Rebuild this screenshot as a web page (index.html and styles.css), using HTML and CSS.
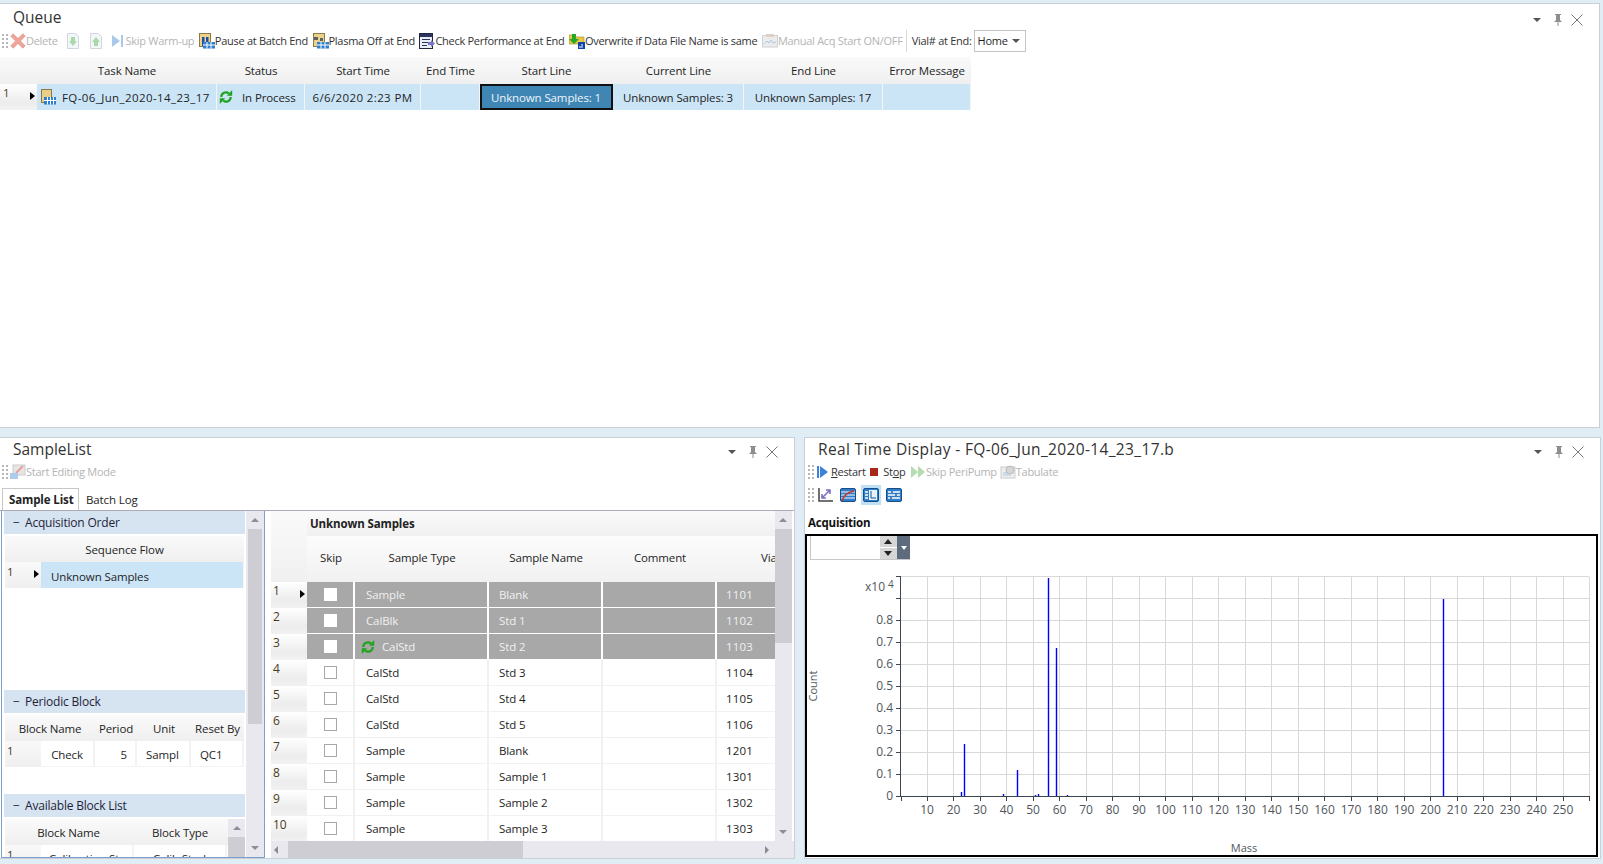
FILE: index.html
```html
<!DOCTYPE html>
<html lang="en">
<head>
<meta charset="utf-8">
<title>Queue</title>
<link rel="stylesheet" href="styles.css">
</head>
<body>
<svg class="defs" width="0" height="0" aria-hidden="true">
  <symbol id="grip" viewBox="0 0 6 14"><g fill="#b5b5b5"><rect x="0" y="0" width="2" height="2"/><rect x="4" y="0" width="2" height="2"/><rect x="0" y="4" width="2" height="2"/><rect x="4" y="4" width="2" height="2"/><rect x="0" y="8" width="2" height="2"/><rect x="4" y="8" width="2" height="2"/><rect x="0" y="12" width="2" height="2"/><rect x="4" y="12" width="2" height="2"/></g></symbol>
  <symbol id="plate" viewBox="0 0 16 16"><rect x="1.500" y=".5" width="10" height="13" fill="#e8cf87" stroke="#8a7a4a"/><rect x="4" y="8" width="12" height="7.500" fill="#2f7fd0"/><path d="M4 11.500h12M7.500 8v7.500M10.500 8v7.500M13.500 8v7.500" stroke="#fff"/></symbol>
  <symbol id="cycle" viewBox="0 0 14 16"><path d="M2.300 8A4.600 4.600 0 0 1 9.800 4.400" fill="none" stroke="#1fa31f" stroke-width="2.200"/><path d="M7.800 6.800h5.400V1z" fill="#1fa31f"/><path d="M11.700 8A4.600 4.600 0 0 1 4.200 11.600" fill="none" stroke="#1fa31f" stroke-width="2.200"/><path d="M6.200 9.200H.8V15z" fill="#1fa31f"/></symbol>
  <symbol id="down" viewBox="0 0 12 16"><path d="M.5.500h8l3 3v12H.5z" fill="#f4f7fa" stroke="#cfd8e0"/><path d="M4 4h4v4h2l-4 5-4-5h2z" fill="#a9d8a9"/></symbol>
  <symbol id="up" viewBox="0 0 12 16"><path d="M.5.500h8l3 3v12H.5z" fill="#f4f7fa" stroke="#cfd8e0"/><path d="M4 13h4V9h2L6 4 2 9h2z" fill="#a9d8a9"/></symbol>
</svg>

<main class="app">
  <section class="panel queue">
    <header class="title-row top">
      <h2 class="title">Queue</h2>
      <div class="win-btns"><i class="tri"></i><svg class="pin" viewBox="0 0 10 12"><path d="M2 0h6v1H7v5l2 2H1l2-2V1H2zM4.500 8h1v4h-1z" fill="#8e8e8e"/></svg><svg class="close" viewBox="0 0 12 12"><path d="M.5.500l11 11M11.500.500l-11 11" stroke="#777" fill="none"/></svg></div>
    </header>
    <div class="toolbar">
      <svg class="grip"><use href="#grip"/></svg>
      <span class="tool off first"><svg class="ico" viewBox="0 0 16 16"><path d="M.8 3.200l2.400-2.400L8 5.600l4.800-4.800 2.400 2.400L10.400 8l4.800 4.800-2.400 2.400L8 10.400l-4.800 4.800-2.400-2.400L5.600 8z" fill="#efa59a" stroke="#d98a80" stroke-width=".6"/></svg>Delete</span>
      <span class="tool off arrow-down"><svg class="ico small"><use href="#down"/></svg></span>
      <span class="tool off arrow-up"><svg class="ico small"><use href="#up"/></svg></span>
      <span class="tool off skip"><svg class="ico" viewBox="0 0 16 16"><path d="M2 2l8 6-8 6z" fill="#a9c9ea"/><rect x="11" y="2" width="2" height="12" fill="#a9c9ea"/></svg>Skip Warm-up</span>
      <span class="tool"><svg class="ico" viewBox="0 0 16 16"><rect x=".5" y=".5" width="11" height="13" fill="#ecd28a" stroke="#8a7a4a"/><path d="M3 4h2.500v9H3zM7 4h2.500v9H7z" fill="#1d4fa8"/><rect x="4" y="9" width="12" height="6.500" fill="#2f7fd0"/><path d="M4 12h12M8 9v6.500M12 9v6.500" stroke="#fff"/></svg>Pause at Batch End</span>
      <span class="tool"><svg class="ico" viewBox="0 0 16 16"><rect x=".5" y=".5" width="11" height="13" fill="#ecd28a" stroke="#8a7a4a"/><path d="M1 4h4v3H1zM7 5h3v3H7z" fill="#5c6068"/><rect x="4" y="9" width="12" height="6.500" fill="#2f7fd0"/><path d="M4 12h12M8 9v6.500M12 9v6.500" stroke="#fff"/></svg>Plasma Off at End</span>
      <span class="tool"><svg class="ico" viewBox="0 0 16 16"><rect x=".5" y=".5" width="13" height="15" fill="#e9edf5" stroke="#22273f"/><rect x="1" y="1" width="12" height="3" fill="#2b3560"/><path d="M3 6.500h8M3 9.500h6M3 12.500h5" stroke="#2b3560"/><path d="M9 9h3V7l4 3.500L12 14v-2H9z" fill="#7b73c8"/></svg>Check Performance at End</span>
      <span class="tool"><svg class="ico" viewBox="0 0 16 16"><path d="M0 2h6l1 2h8v7H0z" fill="#e8c84a" stroke="#a08a2a" stroke-width=".6"/><path d="M3 1h4v5h3l-5 5-5-5h3z" fill="#27a827"/><rect x="9" y="9" width="7" height="7" fill="#0d47a8"/><path d="M11 15v-2M13 15v-4" stroke="#fff"/></svg>Overwrite if Data File Name is same</span>
      <span class="tool off"><svg class="ico" viewBox="0 0 16 16"><rect x=".5" y="2.500" width="15" height="11.500" fill="#ececec" stroke="#d0d0d0"/><path d="M2 11l3-3 2 2 2-3 2 3 3-1" stroke="#a9c9ea" fill="none"/><rect x="4" y="1" width="8" height="3" fill="#e2cfc4"/></svg>Manual Acq Start ON/OFF</span>
      <i class="sep"></i>
      <span class="tool vial">Vial# at End:</span>
      <div class="combo">Home<i class="tri dark"></i></div>
    </div>
    <div class="qtable">
      <div class="qhead"><b class="h-stub"></b><b class="q1">Task Name</b><b class="q2">Status</b><b class="q3">Start Time</b><b class="q4">End Time</b><b class="q5">Start Line</b><b class="q6">Current Line</b><b class="q7">End Line</b><b class="q8">Error Message</b></div>
      <div class="qrow">
        <span class="stub"><em>1</em><i class="arrow"></i></span>
        <span class="q1 c left"><svg class="ico"><use href="#plate"/></svg><span class="task">FQ-06_Jun_2020-14_23_17</span></span>
        <span class="q2 c left"><svg class="ico status"><use href="#cycle"/></svg><span>In Process</span></span>
        <span class="q3 c stamp">6/6/2020 2:23 PM</span>
        <span class="q4 c"></span>
        <span class="q5 c sel">Unknown Samples: 1</span>
        <span class="q6 c">Unknown Samples: 3</span>
        <span class="q7 c">Unknown Samples: 17</span>
        <span class="q8 c"></span>
      </div>
    </div>
  </section>

  <div class="lower">
    <section class="panel samples">
      <header class="title-row">
        <h2 class="title">SampleList</h2>
        <div class="win-btns"><i class="tri"></i><svg class="pin" viewBox="0 0 10 12"><path d="M2 0h6v1H7v5l2 2H1l2-2V1H2zM4.500 8h1v4h-1z" fill="#8e8e8e"/></svg><svg class="close" viewBox="0 0 12 12"><path d="M.5.500l11 11M11.500.500l-11 11" stroke="#777" fill="none"/></svg></div>
      </header>
      <div class="toolbar">
        <svg class="grip"><use href="#grip"/></svg>
        <span class="tool off first"><svg class="ico" viewBox="0 0 16 16"><rect x="3" y="1" width="12" height="10" fill="#e9e4e4" stroke="#ccc"/><path d="M6 9l7-7" stroke="#e4a0a0" stroke-width="2"/><rect x="0" y="9" width="8" height="6" fill="#a9cdea"/></svg>Start Editing Mode</span>
      </div>
      <div class="tabs"><span class="tab active">Sample List</span><span class="tab">Batch Log</span></div>
      <div class="split">
        <div class="left-pane">
          <div class="left-list">
            <div class="group"><span class="minus">−</span>Acquisition Order</div>
            <div class="lhead"><b class="fill">Sequence Flow</b></div>
            <div class="lrow"><span class="stub"><em>1</em><i class="arrow"></i></span><span class="c fill blue seq">Unknown Samples</span></div>
            <div class="spacer"></div>
            <div class="group"><span class="minus">−</span>Periodic Block</div>
            <div class="lhead"><b class="p1">Block Name</b><b class="p2">Period</b><b class="p3">Unit</b><b class="p4">Reset By</b></div>
            <div class="lrow"><span class="stub"><em>1</em></span><span class="c w p1b">Check</span><span class="c w p2 right">5</span><span class="c w p3">Sampl</span><span class="c w p4">QC1</span></div>
            <div class="spacer2"></div>
            <div class="group"><span class="minus">−</span>Available Block List</div>
            <div class="avail">
              <div class="avail-main">
                <div class="lhead"><b class="a1">Block Name</b><b class="a2">Block Type</b></div>
                <div class="lrow clip"><span class="stub"><em>1</em></span><span class="c w a1b">Calibration St</span><span class="c w a2">Calib Stnd</span></div>
              </div>
              <div class="vbar mini"><i class="up"></i><i class="thumb"></i><i class="dn"></i></div>
            </div>
          </div>
          <div class="vbar"><i class="up"></i><i class="thumb"></i><i class="dn"></i></div>
        </div>
        <div class="grid-pane">
          <div class="grid-main">
            <div class="grid-view">
              <div class="ghead">
                <div class="gcorner"></div>
                <div class="gheads">
                  <div class="gband">Unknown Samples</div>
                  <div class="gcols"><b class="g1">Skip</b><b class="g2">Sample Type</b><b class="g3">Sample Name</b><b class="g4">Comment</b><b class="g5">Via</b></div>
                </div>
              </div>
              <div class="grow done"><span class="stub gs"><em>1</em><i class="arrow"></i></span><span class="g1 c"><i class="chk"></i></span><span class="g2 c">Sample</span><span class="g3 c">Blank</span><span class="g4 c"></span><span class="g5 c">1101</span></div>
              <div class="grow done"><span class="stub gs"><em>2</em></span><span class="g1 c"><i class="chk"></i></span><span class="g2 c">CalBlk</span><span class="g3 c">Std 1</span><span class="g4 c"></span><span class="g5 c">1102</span></div>
              <div class="grow done"><span class="stub gs"><em>3</em></span><span class="g1 c"><i class="chk"></i></span><span class="g2 c run"><svg class="ico status"><use href="#cycle"/></svg>CalStd</span><span class="g3 c">Std 2</span><span class="g4 c"></span><span class="g5 c">1103</span></div>
              <div class="grow"><span class="stub gs"><em>4</em></span><span class="g1 c"><i class="chk"></i></span><span class="g2 c">CalStd</span><span class="g3 c">Std 3</span><span class="g4 c"></span><span class="g5 c">1104</span></div>
              <div class="grow"><span class="stub gs"><em>5</em></span><span class="g1 c"><i class="chk"></i></span><span class="g2 c">CalStd</span><span class="g3 c">Std 4</span><span class="g4 c"></span><span class="g5 c">1105</span></div>
              <div class="grow"><span class="stub gs"><em>6</em></span><span class="g1 c"><i class="chk"></i></span><span class="g2 c">CalStd</span><span class="g3 c">Std 5</span><span class="g4 c"></span><span class="g5 c">1106</span></div>
              <div class="grow"><span class="stub gs"><em>7</em></span><span class="g1 c"><i class="chk"></i></span><span class="g2 c">Sample</span><span class="g3 c">Blank</span><span class="g4 c"></span><span class="g5 c">1201</span></div>
              <div class="grow"><span class="stub gs"><em>8</em></span><span class="g1 c"><i class="chk"></i></span><span class="g2 c">Sample</span><span class="g3 c">Sample 1</span><span class="g4 c"></span><span class="g5 c">1301</span></div>
              <div class="grow"><span class="stub gs"><em>9</em></span><span class="g1 c"><i class="chk"></i></span><span class="g2 c">Sample</span><span class="g3 c">Sample 2</span><span class="g4 c"></span><span class="g5 c">1302</span></div>
              <div class="grow"><span class="stub gs"><em>10</em></span><span class="g1 c"><i class="chk"></i></span><span class="g2 c">Sample</span><span class="g3 c">Sample 3</span><span class="g4 c"></span><span class="g5 c">1303</span></div>
            </div>
            <div class="vbar gbar"><i class="up"></i><i class="thumb"></i><i class="dn"></i></div>
          </div>
          <div class="hbar"><i class="lf"></i><i class="hthumb"></i><i class="rt"></i></div>
        </div>
      </div>
    </section>

    <section class="panel realtime">
      <header class="title-row">
        <h2 class="title wide">Real Time Display - FQ-06_Jun_2020-14_23_17.b</h2>
        <div class="win-btns"><i class="tri"></i><svg class="pin" viewBox="0 0 10 12"><path d="M2 0h6v1H7v5l2 2H1l2-2V1H2zM4.500 8h1v4h-1z" fill="#8e8e8e"/></svg><svg class="close" viewBox="0 0 12 12"><path d="M.5.500l11 11M11.500.500l-11 11" stroke="#777" fill="none"/></svg></div>
      </header>
      <div class="toolbar">
        <svg class="grip"><use href="#grip"/></svg>
        <span class="tool first pull"><svg class="ico" viewBox="0 0 16 16"><rect x="2" y="2" width="2" height="12" fill="#3f7fd8"/><path d="M5 2l8 6-8 6z" fill="#3f7fd8"/></svg><u>R</u>estart</span>
        <span class="tool"><i class="stop"></i><span>St<u>o</u>p</span></span>
        <span class="tool off"><svg class="ico" viewBox="0 0 16 16"><path d="M1 2l7 6-7 6zM8 2l7 6-7 6z" fill="#b5dcb0"/></svg>Skip PeriPump</span>
        <span class="tool off near"><svg class="ico" viewBox="0 0 16 16"><rect x="1" y="3" width="14" height="11" fill="#eee" stroke="#ccc"/><circle cx="10" cy="6" r="4" fill="#d5d5d5" stroke="#bbb"/><path d="M3 9h5M3 11h8" stroke="#a9c9ea"/></svg>Tabulate</span>
      </div>
      <div class="toolbar">
        <svg class="grip"><use href="#grip"/></svg>
        <span class="btn"><svg viewBox="0 0 16 16"><path d="M2 1v13h14" stroke="#444" stroke-width="1.500" fill="none"/><path d="M5 11l8-8M9 3h4v4M5 7v4h4" stroke="#7a70c0" stroke-width="1.600" fill="none"/></svg></span>
        <span class="btn"><svg viewBox="0 0 16 16"><rect x=".5" y="1.500" width="15" height="13" rx="1.500" fill="#2e7dc9" stroke="#184f8a"/><path d="M1 5h14M1 8h14M1 11h14" stroke="#fff"/><path d="M2 14c2-6 6-9 12-10" stroke="#c0392b" stroke-width="1.500" fill="none"/></svg></span>
        <span class="btn on"><svg viewBox="0 0 16 16"><rect x=".5" y="1.500" width="15" height="13" rx="1.500" fill="#2e7dc9" stroke="#184f8a"/><rect x="6" y="3" width="8" height="10" fill="#e8f2fb"/><path d="M8 4v7h5" stroke="#184f8a" fill="none"/><path d="M2 5h3M2 8h3M2 11h3" stroke="#fff" stroke-width="1.500"/></svg></span>
        <span class="btn"><svg viewBox="0 0 16 16"><rect x=".5" y="1.500" width="15" height="13" rx="1.500" fill="#2e7dc9" stroke="#184f8a"/><path d="M2 5h12M2 8h12M2 11h12" stroke="#fff" stroke-width="1.300"/><path d="M6 4v2M10 7v2M5 10v2" stroke="#184f8a" stroke-width="1.300"/></svg></span>
      </div>
      <div class="acq-label">Acquisition</div>
      <div class="plot-box">
        <div class="spinner"><span class="spin-field"></span><span class="spin-btns"><i class="s-up"></i><i class="s-dn"></i></span><span class="spin-drop"><i class="tri white"></i></span></div>
        <svg class="plot" viewBox="0 0 788 319" role="img" aria-label="Mass spectrum">
          <g class="gridlines">
            <path transform="translate(-2 0)" d="M122 41V261M148.500 41V261M175 41V261M201.500 41V261M228 41V261M254.500 41V261M281 41V261M307.500 41V261M334 41V261M360.500 41V261M387 41V261M413.500 41V261M440 41V261M466.500 41V261M493 41V261M519.500 41V261M546 41V261M572.500 41V261M599 41V261M625.500 41V261M652 41V261M678.500 41V261M705 41V261M731.500 41V261M758 41V261M784.500 41V261"/>
            <path d="M94 40.500H782M94 62.500H782M94 84.500H782M94 106.500H782M94 128.500H782M94 150.500H782M94 172.500H782M94 194.500H782M94 216.500H782M94 238.500H782"/>
          </g>
          <path class="peaks" d="M154.500 260v-4M157.500 260v-52M196.500 260v-2M210.500 260v-26M228.500 260v-1M231.500 260v-2M241.500 260v-218M249.500 260v-148M260.500 260v-1M636.500 260v-197"/>
          <path class="axis" d="M93.500 40V260.500H782.500M89 40.500h4M89 62.500h4M89 84.500h4M89 106.500h4M89 128.500h4M89 150.500h4M89 172.500h4M89 194.500h4M89 216.500h4M89 238.500h4M89 260.500h4"/>
          <path class="axis" transform="translate(-2 0)" d="M96.500 261v4M122.500 261v4M148.500 261v4M175.500 261v4M201.500 261v4M228.500 261v4M254.500 261v4M281.500 261v4M307.500 261v4M334.500 261v4M360.500 261v4M387.500 261v4M413.500 261v4M440.500 261v4M466.500 261v4M493.500 261v4M519.500 261v4M546.500 261v4M572.500 261v4M599.500 261v4M625.500 261v4M652.500 261v4M678.500 261v4M705.500 261v4M731.500 261v4M758.500 261v4M784.500 261v4"/>
          <g class="labels ylab">
            <text x="78" y="55">x10</text><text x="81" y="52" class="exp">4</text>
            <text x="86" y="88">0.8</text><text x="86" y="110">0.7</text><text x="86" y="132">0.6</text><text x="86" y="154">0.5</text><text x="86" y="176">0.4</text><text x="86" y="198">0.3</text><text x="86" y="220">0.2</text><text x="86" y="242">0.1</text><text x="86" y="264">0</text>
          </g>
          <g class="labels xlab">
            <text x="120" y="278">10</text><text x="146.500" y="278">20</text><text x="173" y="278">30</text><text x="199.500" y="278">40</text><text x="226" y="278">50</text><text x="252.500" y="278">60</text><text x="279" y="278">70</text><text x="305.500" y="278">80</text><text x="332" y="278">90</text><text x="358.500" y="278">100</text><text x="385" y="278">110</text><text x="411.500" y="278">120</text><text x="438" y="278">130</text><text x="464.500" y="278">140</text><text x="491" y="278">150</text><text x="517.500" y="278">160</text><text x="544" y="278">170</text><text x="570.500" y="278">180</text><text x="597" y="278">190</text><text x="623.500" y="278">200</text><text x="650" y="278">210</text><text x="676.500" y="278">220</text><text x="703" y="278">230</text><text x="729.500" y="278">240</text><text x="756" y="278">250</text>
          </g>
          <text class="axis-title" transform="translate(10 150) rotate(-90)">Count</text>
          <text class="axis-title" x="437" y="316">Mass</text>
        </svg>
      </div>
    </section>
  </div>
</main>
</body>
</html>
```

FILE: styles.css
```css
* { box-sizing: border-box; }
html, body { margin: 0; padding: 0; }
body {
  width: 1603px; height: 864px; overflow: hidden;
  background: #e1edf5;
  font-family: "Open Sans", "Noto Sans", sans-serif;
  font-size: 11.5px; letter-spacing: -0.12px; color: #1e1e1e;
}
.defs { position: absolute; }
.app { display: flex; flex-direction: column; height: 864px; padding-top: 3px; gap: 9px; }

.panel { background: #fff; border: 1px solid #c8d0d6; display: flex; flex-direction: column; overflow: hidden; }
.queue { height: 425px; width: 1600px; border-width: 1px 1px 1px 0; }
.lower { display: flex; gap: 9px; height: 422px; }
.samples { width: 795px; border-width: 1px 1px 1px 0; }
.realtime { width: 797px; }

.title-row { height: 22px; display: flex; align-items: center; justify-content: space-between; padding: 0 16px 0 13px; flex: none; }
.title-row.top { height: 25px; }
.title { margin: 0; font-size: 15.5px; font-weight: 400; color: #333; line-height: 22px; letter-spacing: 0; }
.title.wide { letter-spacing: .36px; }
.win-btns { display: flex; align-items: center; margin-top: 6px; }
.tri { width: 0; height: 0; border: 4px solid transparent; border-top: 4px solid #555; border-bottom: 0; display: block; }
.pin { width: 10px; height: 12px; margin: 0 8px 0 12px; }
.close { width: 12px; height: 12px; }

.toolbar { height: 23px; display: flex; align-items: center; padding-left: 2px; flex: none; white-space: nowrap; font-size: 11px; letter-spacing: -0.28px; }
.grip { width: 6px; height: 14px; margin-right: 2px; flex: none; }
.tool { display: inline-flex; align-items: center; color: #333; margin-left: 4.5px; }
.tool.first { margin-left: 0; }
.tool.pull { margin-left: -1px; }
.tool.near { margin-left: 3px; }
.tool.off { color: #b4b4b4; }
.tool u { text-decoration: underline; }
.ico { width: 16px; height: 16px; flex: none; }
.ico.small { width: 12px; height: 16px; }
.arrow-down { margin-left: 9px; }
.arrow-up { margin-left: 11px; }
.skip { margin-left: 8px; }
.sep { width: 1px; height: 22px; background: #d8d8d8; margin: 0 5px 0 3px; }
.vial { margin: 0 2px 0 0; }
.combo { width: 52px; height: 22px; border: 1px solid #c4c4c4; display: flex; align-items: center; justify-content: space-between; padding: 0 5px 0 3px; }

.qtable { width: 971px; margin-top: 5px; }
.qhead, .qrow { display: grid; grid-template-columns: 37px 180px 88px 116px 59px 133px 131px 139px 88px; }
.qhead { height: 27px; background: linear-gradient(#fafafa, #efefef); }
.qhead b, .lhead b, .gcols b { font-weight: 400; display: flex; align-items: center; justify-content: center; }
.qrow { height: 26px; }
.stub { background: linear-gradient(#fff, #ececec 70%, #f2f2f2); display: block; position: relative; }
.stub em { font-style: normal; position: absolute; left: 2px; top: 0; color: #4a3c1a; line-height: 17px; }
.qrow .stub em { left: 3px; }
.arrow { position: absolute; right: 2px; top: 8px; width: 0; height: 0; border-left: 5px solid #000; border-top: 4.500px solid transparent; border-bottom: 4.500px solid transparent; }
.c { background: #cbe5f7; border-right: 1px solid #f5f5f5; display: flex; align-items: center; justify-content: center; white-space: nowrap; overflow: hidden; }
.left { justify-content: flex-start; }
.q1 .ico { margin-left: 3px; }
.task { margin-left: 6px; letter-spacing: .4px; }
.stamp { letter-spacing: .38px; }
.status { width: 14px; height: 16px; margin-left: 2px; margin-right: 9px; }
.sel { background: #3f86b4; color: #eef5fa; outline: 2px solid #111; outline-offset: -2px; }

.tabs { height: 22px; display: flex; align-items: flex-end; padding-left: 2px; margin-top: 5px; flex: none; }
.tab { height: 22px; padding: 0 7px; display: flex; align-items: center; white-space: nowrap; }
.tab.active { font-weight: 700; border: 1px solid #c8c8c8; border-bottom: 0; color: #222; width: 77px; padding: 0 6px; }

.split { display: flex; flex: 1; border-top: 1px solid #aab; min-height: 0; }
.left-pane { width: 264px; margin-left: 1px; flex: none; border: 1px solid #7d9fce; border-top: 0; display: flex; background: #fff; overflow: hidden; }
.left-list { width: 243px; padding-left: 2px; flex: none; display: flex; flex-direction: column; overflow: hidden; }
.group { height: 23px; background: #d6e3f0; flex: none; display: flex; align-items: center; color: #1f1f3a; font-size: 12px; letter-spacing: -0.2px; }
.minus { width: 21px; padding-left: 9px; flex: none; }
.lhead { display: flex; height: 26px; margin: 2px 1px 0; background: linear-gradient(#fafafa, #efefef); flex: none; }
.lrow { display: flex; height: 26px; margin: 0 1px; flex: none; }
.lrow .c { padding-top: 2px; }
.lrow .stub { width: 36px; flex: none; background: linear-gradient(#f9f9f9, #efefef); }
.lrow .stub em { top: 1px; }
.fill { flex: 1; }
.blue { justify-content: flex-start; }
.seq { padding-left: 10px; }
.spacer { height: 102px; flex: none; }
.spacer2 { height: 27px; flex: none; }
.p1 { width: 90px; } .p2 { width: 42px; } .p3 { width: 54px; } .p4 { flex: 1; }
.w { background: #fff; border-right: 2px solid #f3f3f3; border-bottom: 1px solid #f3f3f3; }
.p1b { width: 54px; justify-content: center; }
.right { justify-content: flex-end; padding-right: 8px; }
.lrow .p3 { justify-content: flex-start; padding-left: 9px; }
.lrow .p4 { justify-content: flex-start; padding-left: 9px; }
.avail { display: flex; flex: 1; margin-top: 2px; min-height: 0; }
.avail-main { flex: 1; min-width: 0; }
.avail .lhead { margin-top: 0; margin-right: 0; }
.a1 { width: 127px; } .a2 { flex: 1; }
.a1b { width: 93px; justify-content: flex-start; padding-left: 8px; }

.vbar { width: 18px; background: #e8e8ee; display: flex; flex-direction: column; align-items: stretch; padding: 0 2px; flex: none; margin-left: 1px; }
.vbar .up, .vbar .dn { height: 18px; flex: none; position: relative; }
.vbar .up::after, .vbar .dn::after { content: ""; position: absolute; left: 3px; top: 7px; border: 4px solid transparent; }
.vbar .up::after { border-bottom: 4px solid #8c8c96; border-top: 0; }
.vbar .dn::after { border-top: 4px solid #8c8c96; border-bottom: 0; }
.vbar .thumb { height: 195px; background: #cdcdd3; flex: none; }
.vbar .dn { margin-top: auto; }
.vbar.mini { width: 17px; padding: 0; margin-left: 0; }
.vbar.mini .up::after, .vbar.mini .dn::after { left: 5px; }
.vbar.mini .thumb { height: 20px; }

.grid-pane { flex: 1; min-width: 0; display: flex; flex-direction: column; padding-left: 6px; }
.grid-main { display: flex; flex: 1; min-height: 0; }
.grid-view { width: 504px; flex: none; overflow: hidden; }
.ghead { display: flex; height: 71px; }
.gcorner { width: 36px; background: linear-gradient(#fafafa, #f0f0f0); flex: none; }
.gheads { flex: 1; display: flex; flex-direction: column; }
.gband { height: 25px; padding-left: 3px; font-weight: 700; background: linear-gradient(#fafafa, #f0f0f0); color: #222; display: flex; align-items: center; }
.gcols { height: 46px; display: flex; padding-bottom: 4px; background: linear-gradient(#fcfcfc, #f1f1f1); }
.g1 { width: 48px; flex: none; }
.g2 { width: 134px; flex: none; }
.g3 { width: 114px; flex: none; }
.g4 { width: 114px; flex: none; }
.g5 { width: 58px; flex: none; }
.gcols .g5 { justify-content: flex-start; padding-left: 44px; overflow: hidden; }
.grow { display: flex; height: 26px; }
.gs { width: 36px; flex: none; }
.gs em { font-size: 12px; }
.grow .c { background: #fff; border-right: 2px solid #f1f1f1; border-bottom: 1px solid #f1f1f1; justify-content: flex-start; padding-left: 10px; }
.grow .g1.c { justify-content: center; padding: 0; }
.grow .g2.c { padding-left: 11px; }
.grow .g5.c { border-right: 0; letter-spacing: .2px; padding-left: 9px; }
.grow.done .c { background: #a8a8a8; color: #f0f0f0; border-right-color: #fff; border-bottom-color: #fff; }
.grow .g2.run { padding-left: 5px; }
.run .status { margin: 0 7px 0 1px; }
.chk { display: block; width: 13px; height: 13px; border: 1px solid #a8a8a8; background: #fff; }
.done .chk { border: 0; }
.gbar { width: 17px; padding: 0; margin-left: 0; }
.gbar .up::after, .gbar .dn::after { left: 4px; }
.gbar .thumb { height: 114px; }
.hbar { height: 17px; background: #e8e8ee; display: flex; align-items: center; flex: none; }
.hbar .lf { width: 17px; height: 17px; flex: none; position: relative; }
.hbar .lf::after, .hbar .rt::after { content: ""; position: absolute; top: 5px; border: 4px solid transparent; }
.hbar .lf::after { left: 3px; border-right: 4px solid #8c8c96; border-left: 0; }
.hbar .rt::after { left: 5px; border-left: 4px solid #8c8c96; border-right: 0; }
.hbar .hthumb { width: 235px; height: 17px; background: #cdcdd3; flex: none; }
.hbar .rt { width: 17px; height: 17px; margin-left: auto; position: relative; flex: none; margin-right: 17px; }

.realtime .toolbar { padding-left: 3px; }
.stop { width: 8px; height: 8px; background: #a8281a; display: block; margin-right: 5px; }
.btn { width: 20px; height: 20px; display: flex; align-items: center; justify-content: center; margin: 0 3px 0 -1px; padding: 0; }
.btn + .btn { margin-left: 0; }
.btn svg { width: 16px; height: 16px; }
.btn.on { background: #bfe0f5; }
.acq-label { font-weight: 700; color: #111; height: 16px; line-height: 16px; margin: 9px 0 3px 3px; letter-spacing: -0.2px; flex: none; }
.plot-box { flex: 1; margin: 0 2px 1px 0; border: 2px solid #000; background: #fff; position: relative; min-height: 0; }
.spinner { position: absolute; left: 3px; top: 0; width: 100px; height: 24px; display: flex; border: 1px solid #c8c8c8; border-top: 0; border-right: 0; }
.spin-field { flex: 1; }
.spin-btns { width: 17px; display: flex; flex-direction: column; gap: 1px; background: #fff; }
.spin-btns i { flex: 1; background: #d6d6d6; position: relative; }
.s-up::after, .s-dn::after { content: ""; position: absolute; left: 4px; top: 3px; border: 4px solid transparent; }
.s-up::after { border-bottom: 5px solid #222; border-top: 0; }
.s-dn::after { border-top: 5px solid #222; border-bottom: 0; }
.spin-drop { width: 13px; background: #5d6b7c; display: flex; align-items: center; justify-content: center; }
.tri.white { border-top-color: #fff; border-width: 4px 3.500px 0; }
.plot { display: block; width: 788px; height: 319px; }
.gridlines path { stroke: #d9d9d9; fill: none; shape-rendering: crispEdges; }
.peaks { stroke: #0000ff; stroke-width: 1.4; fill: none; }
.axis { stroke: #3c4650; fill: none; shape-rendering: crispEdges; }
.labels text { font-size: 12px; fill: #50565c; letter-spacing: 0; }
.ylab text { text-anchor: end; }
.ylab .exp { text-anchor: start; font-size: 10px; }
.xlab text { text-anchor: middle; }
.axis-title { font-size: 11px; fill: #50565c; text-anchor: middle; letter-spacing: 0; }
```
